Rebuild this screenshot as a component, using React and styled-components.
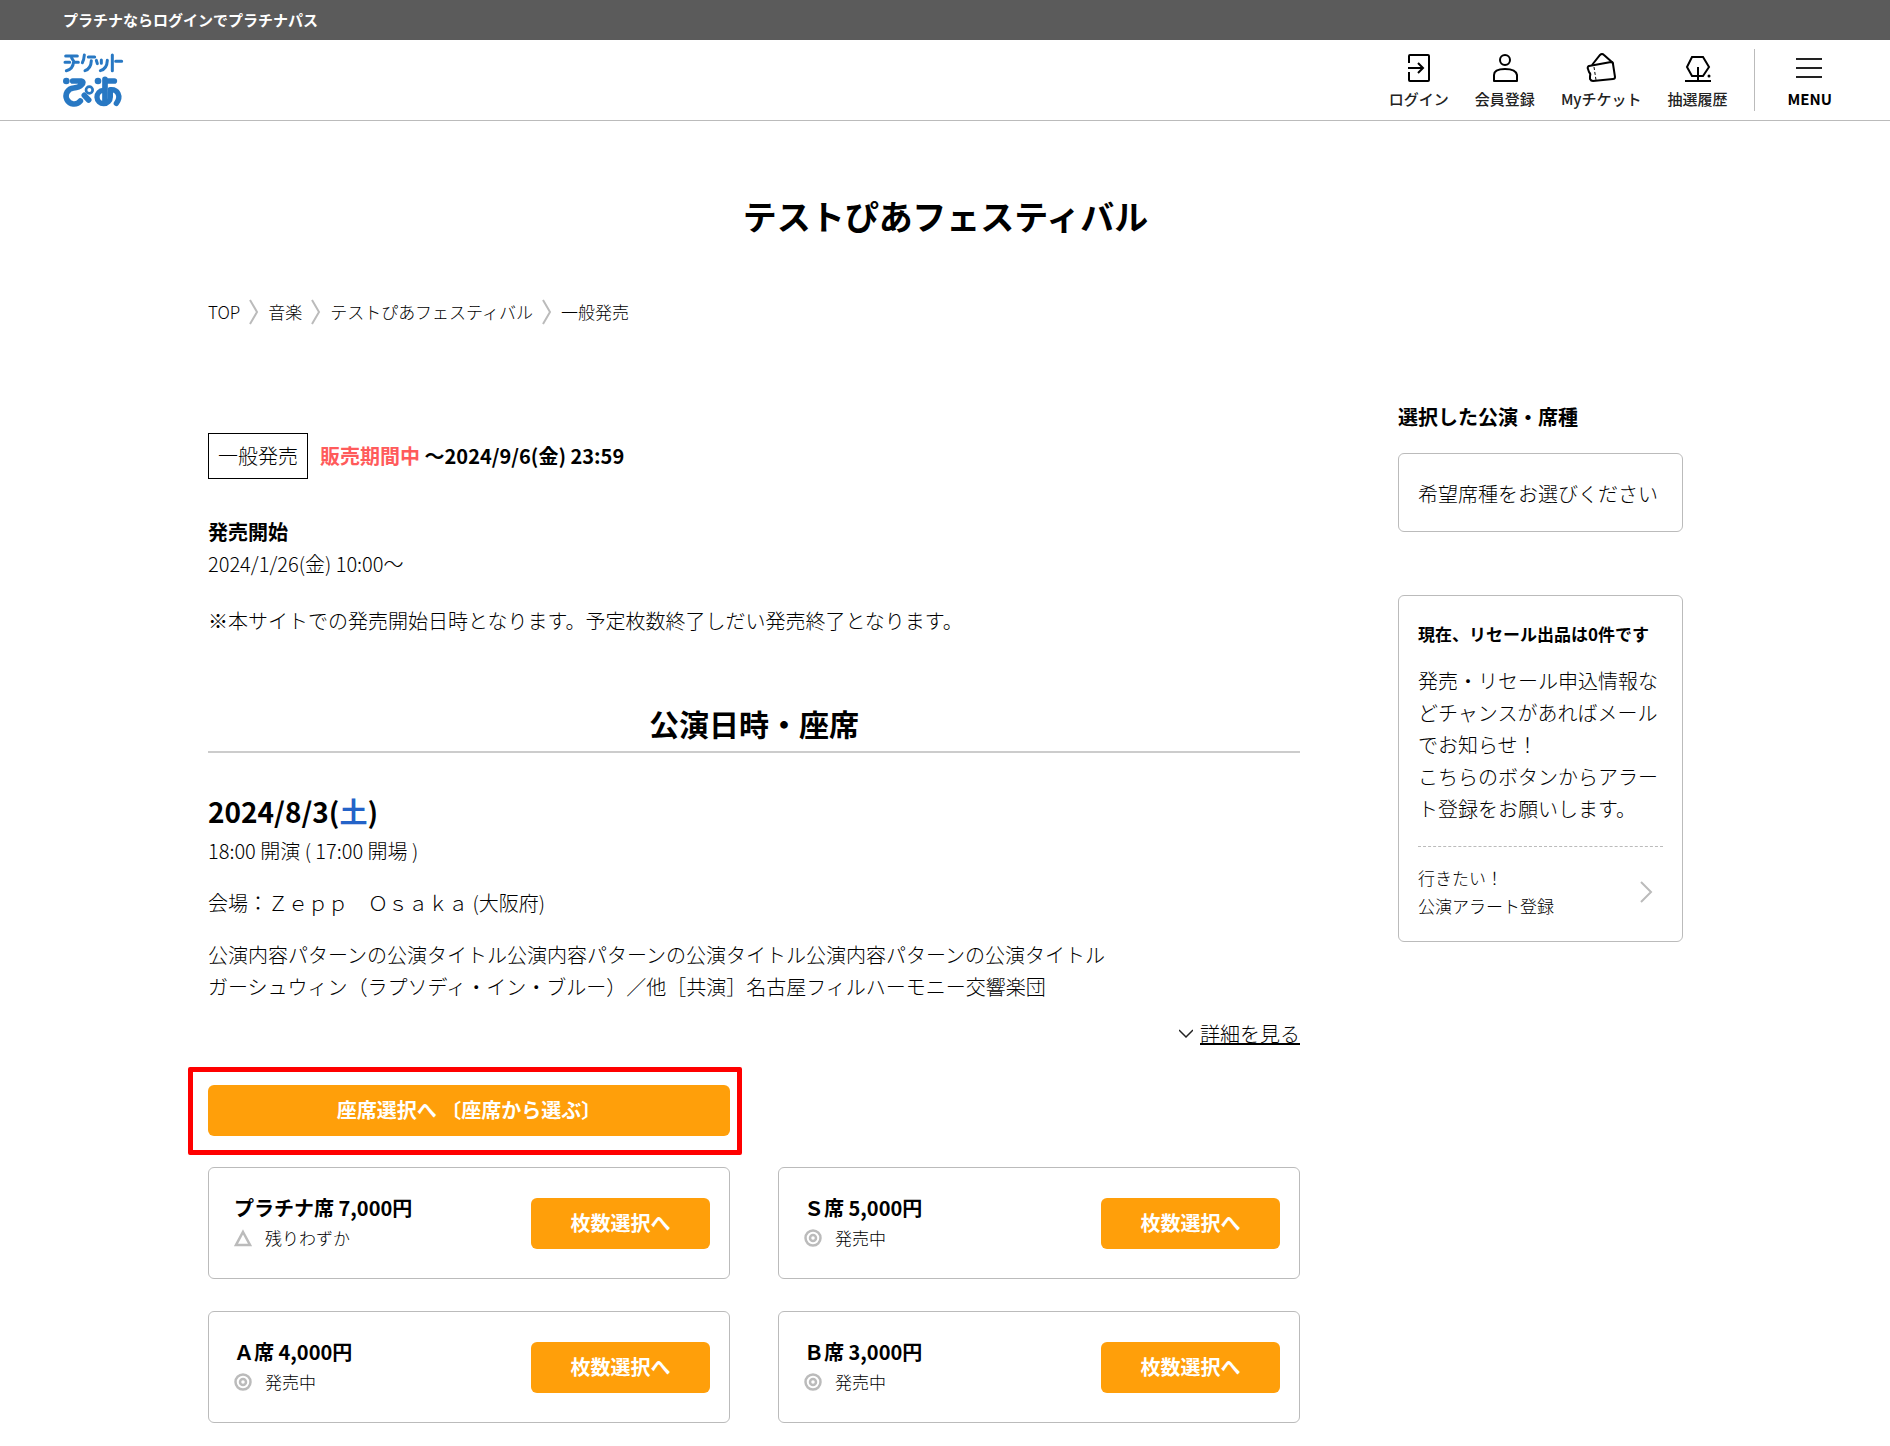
import styled, { createGlobalStyle } from 'styled-components'

const GlobalStyle = createGlobalStyle`
    * {
        box-sizing: border-box;
        margin: 0;
        padding: 0;
    }

    body {
        background: #fff;
        color: #000;
        font-family: 'Noto Sans CJK JP', sans-serif;
        font-size: 20px;
        font-weight: 300;
        line-height: 32px;
    }

    a {
        color: inherit;
        text-decoration: none;
    }

    button {
        font-family: inherit;
        cursor: pointer;
    }
`

const TopBar = styled.div`
    height: 40px;
    padding: 0 63px;
    background: #5b5b5b;
    color: #fff;
    font-size: 15px;
    font-weight: 700;
    line-height: 40px;
`

const Header = styled.header`
    display: flex;
    justify-content: space-between;
    align-items: center;
    height: 81px;
    padding: 0 58px 0 63px;
    border-bottom: 1px solid #bbb;
`

const LogoLink = styled.a`
    display: flex;
`

const Nav = styled.nav`
    display: flex;
    align-items: center;
    gap: 26px;
`

const NavItem = styled.a`
    display: flex;
    flex-direction: column;
    align-items: center;
    gap: 7px;
    color: #222;
    font-size: 15px;
    font-weight: 500;
    line-height: 20px;
    white-space: nowrap;
`

const MenuArea = styled.div`
    display: flex;
    align-items: center;
    height: 62px;
    padding-left: 33px;
    border-left: 1px solid #bbb;
`

const MenuButton = styled.button`
    display: flex;
    flex-direction: column;
    align-items: center;
    gap: 7px;
    border: 0;
    background: none;
    color: #000;
    font-size: 15px;
    font-weight: 700;
    line-height: 20px;
`

const Page = styled.main`
    margin: 0 207px 0 208px;
    padding: 71px 0 23px;
`

const Title = styled.h1`
    font-size: 34px;
    font-weight: 700;
    line-height: 48px;
    text-align: center;
`

const Breadcrumb = styled.nav`
    display: flex;
    align-items: center;
    gap: 9px;
    margin-top: 59px;
    font-size: 17px;
    line-height: 26px;
`

const Columns = styled.div`
    display: flex;
    align-items: flex-start;
    gap: 98px;
    margin-top: 76px;
`

const MainColumn = styled.div`
    flex: 1;
    min-width: 0;
    padding-top: 32px;
`

const SaleRow = styled.div`
    display: flex;
    align-items: center;
    gap: 12px;
`

const SaleTag = styled.span`
    height: 46px;
    padding: 0 9px;
    border: 1px solid #000;
    line-height: 44px;
`

const SalePeriod = styled.p`
    font-weight: 700;
`

const OnSale = styled.span`
    color: #ff5b5b;
`

const StartTitle = styled.h2`
    margin-top: 37px;
    font-size: 20px;
    font-weight: 700;
`

const Note = styled.p`
    margin-top: 25px;
`

const SectionTitle = styled.h2`
    margin-top: 66px;
    padding-bottom: 8px;
    border-bottom: 2px solid #ccc;
    font-size: 30px;
    font-weight: 700;
    line-height: 40px;
    text-align: center;
`

const EventDate = styled.h3`
    margin: 38px 0 4px;
    font-size: 28px;
    font-weight: 700;
    line-height: 40px;
`

const Saturday = styled.span`
    color: #2463c8;
`

const EventText = styled.p`
    margin-top: 20px;
`

const DetailsRow = styled.div`
    display: flex;
    justify-content: flex-end;
    align-items: center;
    margin-top: 15px;
`

const DetailsButton = styled.button`
    display: flex;
    align-items: center;
    gap: 7px;
    border: 0;
    background: none;
    font-size: 20px;
    font-weight: 300;
    line-height: 32px;

    span {
        text-decoration: underline;
        text-decoration-thickness: 2px;
    }
`

const SeatGrid = styled.div`
    display: grid;
    grid-template-columns: 1fr 1fr;
    gap: 32px 48px;
`

const SelectArea = styled(SeatGrid)`
    margin: 35px 0 31px;
`

const Highlight = styled.div`
    position: relative;
    display: flex;

    &::after {
        content: '';
        position: absolute;
        inset: -18px -12px -19px -20px;
        border: 5px solid #f00;
        border-radius: 2px;
        pointer-events: none;
    }
`

const OrangeButton = styled.button`
    flex: none;
    width: ${({ $wide }) => ($wide ? '100%' : '179px')};
    height: 51px;
    padding-bottom: 2px;
    border: 0;
    border-radius: 6px;
    background: #ff9f0a;
    color: #fff;
    font-size: 20px;
    font-weight: 700;
    white-space: nowrap;
`

const SeatCard = styled.article`
    display: flex;
    justify-content: space-between;
    align-items: center;
    height: 112px;
    padding: 0 19px 0 25px;
    border: 1px solid #bbb;
    border-radius: 6px;
`

const SeatInfo = styled.div`
    padding-bottom: 2px;
`

const SeatName = styled.h4`
    font-size: 20px;
    font-weight: 700;
    line-height: 32px;
`

const SeatStatus = styled.p`
    display: flex;
    align-items: center;
    gap: 13px;
    font-size: 17px;
    line-height: 28px;
`

const Sidebar = styled.aside`
    flex: none;
    width: 285px;
`

const SideTitle = styled.h2`
    margin-bottom: 20px;
    font-size: 20px;
    font-weight: 700;
`

const SideBox = styled.section`
    padding: 24px 19px 21px;
    border: 1px solid #bbb;
    border-radius: 6px;
`

const ResaleBox = styled(SideBox)`
    margin-top: 63px;
`

const ResaleTitle = styled.h3`
    margin-bottom: 17px;
    font-size: 17px;
    font-weight: 700;
    line-height: 28px;
    white-space: nowrap;
`

const AlertLink = styled.a`
    display: flex;
    justify-content: space-between;
    align-items: center;
    margin-top: 21px;
    padding: 17px 10px 0 0;
    border-top: 1px dashed #bbb;
    font-size: 17px;
    line-height: 28px;
`

const Logo = () => (
    <svg width="61" height="55" viewBox="0 0 183 165" fill="none" stroke="#2878c3" strokeLinecap="round" strokeLinejoin="round">
        <g strokeWidth="9">
            <path d="M8 9H43M6 28H20M36 28H46M26 15L32 25Q30 49 10 53" />
            <path d="M64 6Q63 20 58 29M76 12H95M85 23Q84 47 66 53" />
            <path d="M100 22L103 32M115 21V31M133 22Q132 48 112 53" />
            <path d="M148 6V53M158 25H176" />
        </g>
        <g strokeWidth="17">
            <path d="M29 84H54Q64 86 56 95Q48 104 32 105A24 24 0 1 0 52 144" />
            <path d="M64 127L77 141" />
            <path d="M126 79V148M126 84H154" />
            <path d="M121 112A20 20 0 1 0 142 132V118M142 110C164 108 176 130 160 151" strokeWidth="16" />
        </g>
        <circle cx="79" cy="111" r="10" strokeWidth="8" />
        <g fill="#2878c3" stroke="none">
            <circle cx="10" cy="84" r="10" />
            <circle cx="105" cy="84" r="10" />
        </g>
    </svg>
)

const Icon = ({ children }) => (
    <svg width="30" height="30" viewBox="0 0 30 30" fill="none" stroke="#000" strokeWidth="2" aria-hidden="true">
        {children}
    </svg>
)

const LoginIcon = () => (
    <Icon>
        <path d="M5 11V4Q5 3 6 3H24Q25 3 25 4V28Q25 29 24 29H6Q5 29 5 28V20M4 16H19M14 11L19 16L14 21" />
    </Icon>
)

const MemberIcon = () => (
    <Icon>
        <circle cx="15" cy="8" r="5" />
        <path d="M4 29V23Q4 17 15 17T27 23V29Z" strokeLinejoin="round" />
    </Icon>
)

const TicketIcon = () => (
    <Icon>
        <path d="M2 17Q1 15 3 14L25 10Q27 10 27 12L29 25Q29 27 27 27L7 29Q5 29 4 27V24Q5 22 3 20Z" strokeLinejoin="round" />
        <path d="M6 13L14 3Q16 1 18 3L27 11" />
        <path d="M8 15L10 28" strokeWidth="1" strokeDasharray="3 2" />
    </Icon>
)

const LotteryIcon = () => (
    <Icon>
        <path d="M9 5H20L26 15L20 24H9L4 15ZM15 15V28M2 29H28" />
        <circle cx="26" cy="24" r="1.5" fill="#000" stroke="none" />
    </Icon>
)

const MenuIcon = () => (
    <Icon>
        <path d="M1 7H27M1 16H27M1 25H27" stroke="#222" />
    </Icon>
)

const CrumbArrow = () => (
    <svg width="10" height="26" viewBox="0 0 10 26" fill="none" stroke="#bbb" strokeWidth="2" aria-hidden="true">
        <path d="M1 1L8 13L1 25" />
    </svg>
)

const StatusIcon = ({ few }) => (
    <svg width="18" height="18" viewBox="0 0 18 18" fill="none" stroke="#bbb" strokeWidth="2.5" aria-hidden="true">
        {few ? (
            <path d="M9 3L16 16H2Z" />
        ) : (
            <>
                <circle cx="9" cy="9" r="7.5" />
                <circle cx="9" cy="9" r="3" />
            </>
        )}
    </svg>
)

const navItems = [
    { label: 'ログイン', icon: <LoginIcon /> },
    { label: '会員登録', icon: <MemberIcon /> },
    { label: 'Myチケット', icon: <TicketIcon /> },
    { label: '抽選履歴', icon: <LotteryIcon /> },
]

const seats = [
    { name: 'プラチナ席 7,000円', status: '残りわずか', few: true },
    { name: 'Ｓ席 5,000円', status: '発売中' },
    { name: 'Ａ席 4,000円', status: '発売中' },
    { name: 'Ｂ席 3,000円', status: '発売中' },
]

export default function App() {
    return (
        <>
            <GlobalStyle />
            <TopBar>プラチナならログインでプラチナパス</TopBar>
            <Header>
                <LogoLink href="#" aria-label="チケットぴあ">
                    <Logo />
                </LogoLink>
                <Nav>
                    {navItems.map(({ label, icon }) => (
                        <NavItem href="#" key={label}>
                            {icon}
                            {label}
                        </NavItem>
                    ))}
                    <MenuArea>
                        <MenuButton type="button">
                            <MenuIcon />
                            MENU
                        </MenuButton>
                    </MenuArea>
                </Nav>
            </Header>

            <Page>
                <Title>テストぴあフェスティバル</Title>
                <Breadcrumb>
                    <a href="#">TOP</a>
                    <CrumbArrow />
                    <a href="#">音楽</a>
                    <CrumbArrow />
                    <a href="#">テストぴあフェスティバル</a>
                    <CrumbArrow />
                    <span>一般発売</span>
                </Breadcrumb>

                <Columns>
                    <MainColumn>
                        <SaleRow>
                            <SaleTag>一般発売</SaleTag>
                            <SalePeriod>
                                <OnSale>販売期間中</OnSale> ～2024/9/6(金) 23:59
                            </SalePeriod>
                        </SaleRow>
                        <StartTitle>発売開始</StartTitle>
                        <p>2024/1/26(金) 10:00～</p>
                        <Note>※本サイトでの発売開始日時となります。予定枚数終了しだい発売終了となります。</Note>

                        <SectionTitle>公演日時・座席</SectionTitle>
                        <EventDate>
                            2024/8/3(<Saturday>土</Saturday>)
                        </EventDate>
                        <p>18:00 開演 ( 17:00 開場 )</p>
                        <EventText>会場：Ｚｅｐｐ　Ｏｓａｋａ (大阪府)</EventText>
                        <EventText>
                            公演内容パターンの公演タイトル公演内容パターンの公演タイトル公演内容パターンの公演タイトル
                            <br />
                            ガーシュウィン（ラプソディ・イン・ブルー）／他［共演］名古屋フィルハーモニー交響楽団
                        </EventText>
                        <DetailsRow>
                            <DetailsButton type="button">
                                <svg width="14" height="10" viewBox="0 0 14 10" fill="none" stroke="#222" strokeWidth="1.5" aria-hidden="true">
                                    <path d="M0 1L7 8L14 1" />
                                </svg>
                                <span>詳細を見る</span>
                            </DetailsButton>
                        </DetailsRow>

                        <SelectArea>
                            <Highlight>
                                <OrangeButton type="button" $wide>
                                    座席選択へ 〔座席から選ぶ〕
                                </OrangeButton>
                            </Highlight>
                        </SelectArea>
                        <SeatGrid>
                            {seats.map(({ name, status, few }) => (
                                <SeatCard key={name}>
                                    <SeatInfo>
                                        <SeatName>{name}</SeatName>
                                        <SeatStatus>
                                            <StatusIcon few={few} />
                                            {status}
                                        </SeatStatus>
                                    </SeatInfo>
                                    <OrangeButton type="button">枚数選択へ</OrangeButton>
                                </SeatCard>
                            ))}
                        </SeatGrid>
                    </MainColumn>

                    <Sidebar>
                        <SideTitle>選択した公演・席種</SideTitle>
                        <SideBox>
                            <p>希望席種をお選びください</p>
                        </SideBox>
                        <ResaleBox>
                            <ResaleTitle>現在、リセール出品は0件です</ResaleTitle>
                            <p>
                                発売・リセール申込情報などチャンスがあればメールでお知らせ！
                                <br />
                                こちらのボタンからアラート登録をお願いします。
                            </p>
                            <AlertLink href="#">
                                <span>
                                    行きたい！
                                    <br />
                                    公演アラート登録
                                </span>
                                <svg width="14" height="22" viewBox="0 0 14 22" fill="none" stroke="#bbb" strokeWidth="2" aria-hidden="true">
                                    <path d="M2 1L12 11L2 21" />
                                </svg>
                            </AlertLink>
                        </ResaleBox>
                    </Sidebar>
                </Columns>
            </Page>
        </>
    )
}
